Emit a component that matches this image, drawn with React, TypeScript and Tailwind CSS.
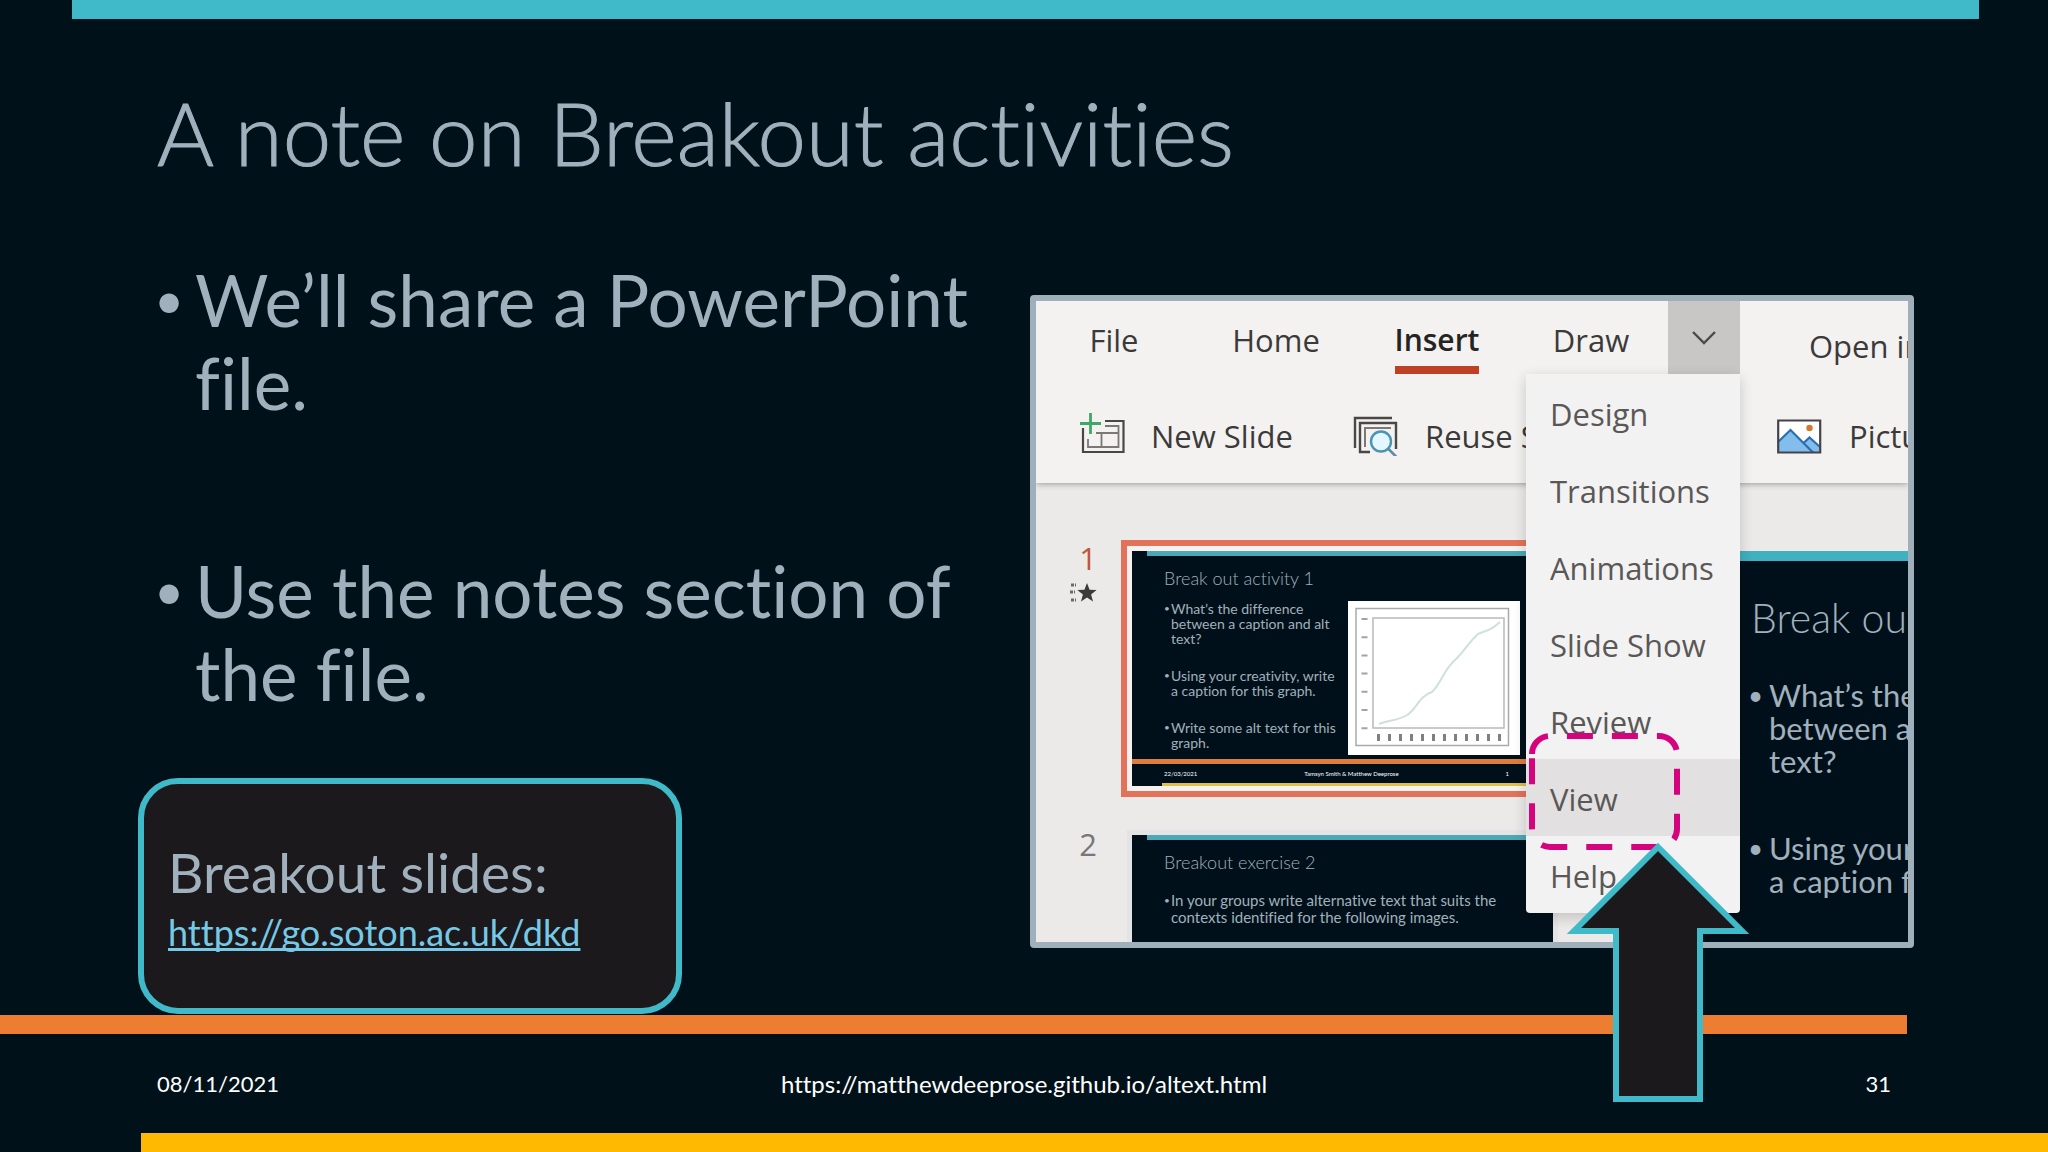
import { ReactNode } from "react"

type SlideType = {
  title: string
  bullets: string[][]
}

const firstSlide: SlideType = {
  title: "Break out activity 1",
  bullets: [
    ["What’s the difference", "between a caption and alt", "text?"],
    ["Using your creativity, write", "a caption for this graph."],
    ["Write some alt text for this", "graph."],
  ],
}

const secondSlide: SlideType = {
  title: "Breakout exercise 2",
  bullets: [["In your groups write alternative text that suits the", "contexts identified for the following images."]],
}

const menuItems = ["Design", "Transitions", "Animations", "Slide Show", "Review", "View", "Help"]

const Lines = ({ lines }: { lines: string[] }) => (
  <div>
    {lines.map((line) => (
      <span key={line} className="block whitespace-nowrap">{line}</span>
    ))}
  </div>
)

const NewSlideIcon = () => (
  <svg viewBox="0 0 48 48" className="h-12 w-12 shrink-0" fill="none" aria-hidden="true">
    <path d="M26 13h18.500v31H4V20" stroke="#4a4846" strokeWidth="2.200" />
    <path d="M26 18h13.500v21H9V31M17 25h22M22.500 25v14" stroke="#7b7876" strokeWidth="1.800" />
    <path d="M11.500 5v21M1 15.500h21" stroke="#3fa866" strokeWidth="2.800" />
  </svg>
)

const ReuseIcon = () => (
  <svg viewBox="0 0 48 48" className="h-12 w-12 shrink-0" fill="none" aria-hidden="true">
    <path d="M2 40V10h37" stroke="#4a4846" strokeWidth="2.400" />
    <path d="M17 44H7V15h36v26" stroke="#4a4846" strokeWidth="2.400" />
    <path d="M12 39V20h26" stroke="#7b7876" strokeWidth="2" />
    <circle cx="28" cy="33.500" r="10" fill="#e4f6ff" stroke="#4a94b4" strokeWidth="2.400" />
    <path d="M35.500 41l10 10" stroke="#5f8ba3" strokeWidth="2.600" />
  </svg>
)

const PictureIcon = () => (
  <svg viewBox="0 0 48 48" className="h-12 w-12 shrink-0" aria-hidden="true">
    <path d="M1 12.500h42v32H1z" fill="#fff" />
    <path d="M1 34L13.500 22 36 44.500H1z" fill="#83bdec" />
    <path d="M26 35.500l6.500-6L43 39v5.500h-8z" fill="#83bdec" />
    <path d="M1 34l12.500-12L36 44.500M26 35.500l6.500-6L43 39" fill="none" stroke="#2a6fae" strokeWidth="2.200" />
    <path d="M1.200 12.500h42v32h-42z" fill="none" stroke="#45434a" strokeWidth="2.200" />
    <circle cx="32.500" cy="20" r="3.200" fill="#cf7a30" />
  </svg>
)

const StarIcon = () => (
  <svg viewBox="0 0 28 22" className="h-[22px] w-7" aria-hidden="true">
    <path d="M18 1l2.600 6.800 7 .3-5.500 4.400 1.900 7L18 15.600l-6 3.900 1.900-7L8.400 8.100l7-.3z" fill="#3d3b3a" />
    <path d="M2 3h5M1 10h5M2 18h5" stroke="#6b6968" strokeWidth="3" strokeDasharray="3 1" />
  </svg>
)

const Graph = () => (
  <svg viewBox="0 0 172 154" className="h-[154px] w-[172px] shrink-0 bg-white" fill="none" aria-label="Line graph">
    <path d="M8 7.500h152.500v137H8z" stroke="#a9aaa6" strokeWidth="1.500" />
    <path d="M25 17h131v110H25z" stroke="#b9bab8" strokeWidth="1.500" />
    <path d="M31 123c10-4 18-3 28-9 9-5 12-19 25-23 10-10 11-22 25-34 9-9 11-15 21-24 10-4 13-4 22-12" stroke="#cfe0dd" strokeWidth="2" />
    <path d="M16.500 17v112" stroke="#a3a3a3" strokeWidth="6" strokeDasharray="2 16.200" />
    <path d="M29 136.500h126" stroke="#808080" strokeWidth="7" strokeDasharray="3 8" />
  </svg>
)

const Thumbnail = ({ slide, selected, children }: { slide: SlideType; selected?: boolean; children?: ReactNode }) => (
  <div className={selected ? "border-[6px] border-[#e2725a] bg-[#f6f1ee] p-[5px]" : "border-[6px] border-transparent bg-[#e4e4e6] bg-clip-padding p-[5px]"}>
    <div className="flex h-[235px] w-[421px] flex-col bg-[#00101a] text-[#a0b0bc]">
      <div className="ml-[15px] h-[5px] bg-[#4aa9b5]" />
      <h3 className="mt-[10px] pl-8 text-[18px] leading-6 font-light">{slide.title}</h3>
      <div className="flex flex-1 pl-8">
        <ul className={selected ? "mt-[11px] w-[184px] space-y-[22px] text-[14px] leading-[15px]" : "mt-[18px] text-[15px] leading-[17px]"}>
          {slide.bullets.map((lines) => (
            <li key={lines[0]} className="flex gap-[3px]">
              <span className="w-1 text-[10px]">•</span>
              <Lines lines={lines} />
            </li>
          ))}
        </ul>
        {children}
      </div>
      <div className="h-[5px] bg-[#df7d3c]" />
      <div className="flex h-[19px] items-center justify-between pr-11 pl-8 text-[6px] leading-none text-white">
        <span>22/03/2021</span>
        <span>Tamsyn Smith &amp; Matthew Deeprose</span>
        <span>1</span>
      </div>
      <div className="ml-[30px] h-[3px] bg-[#dcc04a]" />
    </div>
  </div>
)

const RibbonMenu = () => (
  <ul className="absolute top-full right-0 z-10 w-[214px] rounded-b bg-[#f3f2f2] text-[#5a5856] shadow-[0_4px_14px_rgba(0,0,0,0.18)]">
    {menuItems.map((item) => (
      <li key={item}>
        <button className={item === "View" ? "h-[77px] w-full bg-[#e2e0e1] pt-0.5 pl-6 text-left" : "h-[77px] w-full pt-0.5 pl-6 text-left"}>{item}</button>
      </li>
    ))}
  </ul>
)

const PowerPointWindow = () => (
  <div className="h-[653px] overflow-hidden rounded border-[6px] border-[#9fb0bb] bg-[#eceae9] font-['Open_Sans','Noto_Sans',sans-serif] text-[31px] leading-10 whitespace-nowrap text-[#3b3a39]">
    <div className="relative z-10 h-[182px] bg-[#f3f2f0] shadow-[0_1px_6px_rgba(0,0,0,0.35)]">
      <nav className="flex h-[73px]">
        <button className="w-[156px] shrink-0 pt-1">File</button>
        <button className="w-[168px] shrink-0 pt-1">Home</button>
        <div className="flex w-[154px] shrink-0 justify-center">
          <button className="border-b-8 border-[#bf4125] pt-3 text-[30px] font-semibold text-[#252423]">Insert</button>
        </div>
        <button className="w-[154px] shrink-0 pt-1">Draw</button>
        <div className="relative w-[72px] shrink-0 bg-[#c8c7c6]">
          <button aria-label="More tabs" className="flex h-full w-full items-center justify-center">
            <svg viewBox="0 0 24 14" className="h-[14px] w-6" fill="none" aria-hidden="true">
              <path d="M1 1l11 11L23 1" stroke="#4c4a48" strokeWidth="2.400" />
            </svg>
          </button>
          <RibbonMenu />
        </div>
        <button className="ml-[69px] pt-4">Open in Desktop App</button>
      </nav>
      <div className="flex h-[109px] items-start pt-[34px] pl-[43px]">
        <button className="flex w-[274px] shrink-0 items-center gap-6"><NewSlideIcon /><span className="pt-2">New Slide</span></button>
        <button className="flex w-[424px] shrink-0 items-center gap-6"><ReuseIcon /><span className="pt-2">Reuse Slides</span></button>
        <button className="flex shrink-0 items-center gap-6"><PictureIcon /><span className="pt-2">Pictures</span></button>
      </div>
    </div>
    <div className="flex h-[459px] items-start pt-[57px]">
      <div className="flex w-[85px] shrink-0 flex-col items-end pr-6 leading-9">
        <span className="h-[42px] text-[#c0563b]">1</span>
        <StarIcon />
        <span className="mt-[222px] text-[#777]">2</span>
      </div>
      <div className="flex shrink-0 flex-col gap-[27px] font-['Lato',sans-serif]">
        <Thumbnail slide={firstSlide} selected>
          <div className="mt-[11px]"><Graph /></div>
        </Thumbnail>
        <Thumbnail slide={secondSlide} />
      </div>
      <div className="mt-[11px] ml-[117px] h-[400px] min-w-0 flex-1 overflow-hidden bg-[#00101a] font-['Lato',sans-serif] text-[#a0b0bc]">
        <div className="ml-[33px] h-[10px] bg-[#41b0bf]" />
        <h3 className="mt-8 pl-[70px] text-[41px] leading-[50px] font-light">{firstSlide.title}</h3>
        <ul className="mt-9 space-y-[54px] pl-[67px] text-[31px] leading-[33px]">
          {firstSlide.bullets.map((lines) => (
            <li key={lines[0]} className="flex gap-2">
              <span className="w-[13px] text-[26px]">•</span>
              <Lines lines={lines} />
            </li>
          ))}
        </ul>
      </div>
    </div>
  </div>
)

// dashed highlight and arrow that point at the View entry
const Pointer = () => (
  <svg viewBox="0 0 236 376" className="pointer-events-none absolute top-[432px] left-[494px] z-20 h-[376px] w-[236px]" fill="none" aria-hidden="true">
    <path d="M8 27a18 18 0 0 1 18-18h109a18 18 0 0 1 18 18v75a18 18 0 0 1-18 18H26a18 18 0 0 1-18-18z" stroke="#d4047f" strokeWidth="6" strokeDasharray="26 19" />
    <path d="M134 120l84 84h-42v168H92V204H50z" fill="#1b191b" stroke="#40b9c8" strokeWidth="6" />
  </svg>
)

const App = () => {
  return (
    <div className="flex min-h-screen flex-col overflow-hidden bg-[#00111a] font-['Lato',sans-serif] text-[#a0b1bd] [font-variant-ligatures:none]">
      <div className="mr-[69px] ml-[72px] h-[19px] bg-[#40b9c8]" />
      <header className="px-[157px] pt-16">
        <h1 className="text-[87px] leading-[100px] font-light [-webkit-text-stroke:1px_#a0b1bd]">A note on Breakout activities</h1>
      </header>
      <main className="grid flex-1 grid-cols-2 items-start">
        <section className="pt-[75px]">
          <ul className="space-y-[125px] pl-[154px] text-[71px] leading-[83px]">
            <li className="flex gap-3">
              <span className="w-[29px] text-[52px]">•</span>
              <Lines lines={["We’ll share a PowerPoint", "file."]} />
            </li>
            <li className="flex gap-3">
              <span className="w-[29px] text-[52px]">•</span>
              <Lines lines={["Use the notes section of", "the file."]} />
            </li>
          </ul>
          <div className="mt-[63px] ml-[138px] flex h-[236px] w-[544px] flex-col items-start justify-center gap-1 rounded-[40px] border-[6px] border-[#40b9c8] bg-[#1b191b] px-6">
            <p className="text-[55px] leading-[68px]">Breakout slides:</p>
            <a href="https://go.soton.ac.uk/dkd" className="text-[36px] leading-[44px] text-[#76c9e6] underline [text-decoration-skip-ink:none]">https://go.soton.ac.uk/dkd</a>
          </div>
        </section>
        <section className="relative mt-[112px] mr-[134px] ml-[6px]">
          <PowerPointWindow />
          <Pointer />
        </section>
      </main>
      <footer className="text-[22px] text-white">
        <div className="mr-[141px] h-[19px] bg-[#ed7d31]" />
        <div className="grid h-[99px] grid-cols-3 items-center px-[157px]">
          <span>08/11/2021</span>
          <span className="text-center text-[24px]">https://matthewdeeprose.github.io/altext.html</span>
          <span className="text-right">31</span>
        </div>
        <div className="ml-[141px] h-[19px] bg-[#ffba00]" />
      </footer>
    </div>
  )
}

export default App
